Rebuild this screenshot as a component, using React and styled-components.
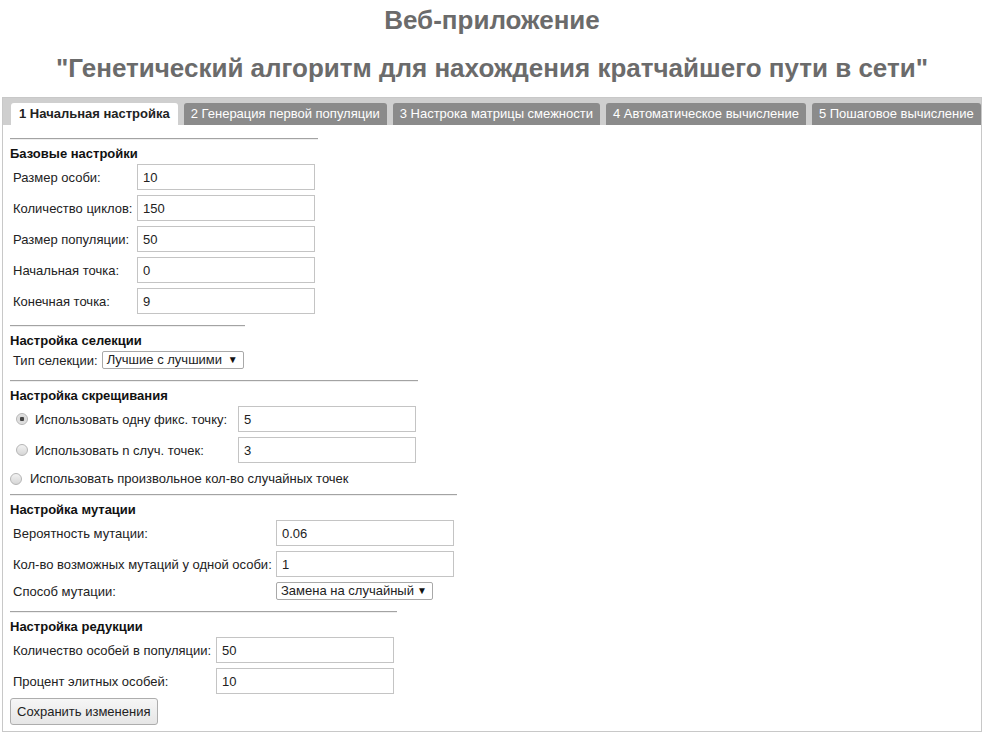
import React from "react"
import styled, { createGlobalStyle } from "styled-components"

const GlobalStyle = createGlobalStyle`
  body {
    margin: 0;
    background: #fff;
    font-family: "Liberation Sans", Arial, sans-serif;
    font-size: 13px;
    color: #222;
  }
`

const Page = styled.div`
  padding: 0 2px;
`

const Title = styled.h1`
  margin: 0;
  padding-top: ${props => props.$top}px;
  text-align: center;
  font-size: 26px;
  line-height: 30px;
  font-weight: bold;
  color: #6b6b6b;
`

const Panel = styled.div`
  margin-top: 14px;
  border: 1px solid #c8c8c8;
  height: 635px;
  box-sizing: border-box;
`

const TabBar = styled.ul`
  list-style: none;
  margin: 0;
  padding: 5px 0 0 8px;
  display: flex;
  gap: 6px;
  background: #cfcfcf;
  height: 27px;
  box-sizing: border-box;
`

const Tab = styled.li`
  height: 22px;
  line-height: 22px;
  padding: 0 ${props => props.$active ? 8 : 7}px;
  border-radius: 3px 3px 0 0;
  white-space: nowrap;
  background: ${props => props.$active ? "#fff" : "#8b8b8b"};
  color: ${props => props.$active ? "#222" : "#fff"};
  font-weight: ${props => props.$active ? "bold" : "normal"};
`

const Content = styled.div`
  padding: 13px 7px 6px 7px;
`

const Rule = styled.div`
  width: ${props => props.$w}px;
  margin-top: ${props => props.$top ?? 11}px;
  border-top: 1px solid #a3a3a3;
  border-bottom: 1px solid #efefef;
`

const Heading = styled.div`
  margin: 6px 0 3px;
  font-weight: bold;
  line-height: 15px;
  color: #111;
`

const FieldGrid = styled.div`
  display: grid;
  grid-template-columns: ${props => props.$label}px 178px;
  row-gap: 5px;
  align-items: center;
`

const Label = styled.div`
  padding-left: 3px;
  white-space: nowrap;
`

const Input = styled.input`
  box-sizing: border-box;
  width: 178px;
  height: 26px;
  border: 1px solid #c4c4c4;
  padding: 0 5px;
  font: inherit;
  color: #222;
  outline: none;
`

const Inline = styled.div`
  display: flex;
  align-items: center;
  gap: 4px;
  padding-left: 3px;
`

const Select = styled.div`
  box-sizing: border-box;
  width: ${props => props.$w}px;
  height: 18px;
  border: 1px solid #a9a9a9;
  border-radius: 2px;
  background: #fff;
  display: flex;
  align-items: center;
  justify-content: space-between;
  padding: 0 5px 0 4px;
  white-space: nowrap;
  line-height: 16px;

  &::after {
    content: "▼";
    font-size: 10px;
    color: #111;
  }
`

const RadioLabel = styled.label`
  display: flex;
  align-items: center;
  gap: ${props => props.$gap ?? 7}px;
  padding-left: ${props => props.$pad ?? 6}px;
  white-space: nowrap;
`

const Radio = styled.span`
  box-sizing: border-box;
  width: 12px;
  height: 12px;
  border-radius: 50%;
  border: 1px solid #b5b5b5;
  background: ${props => props.$checked
    ? "radial-gradient(circle, #444 0 2px, #d8d8d8 2.5px, #ededed 100%)"
    : "linear-gradient(#f2f2f2, #d6d6d6)"};
  flex: none;
`

const FreeRow = styled.div`
  margin-top: 8px;
  line-height: 16px;
`

const Button = styled.button`
  margin-top: 4px;
  height: 27px;
  padding: 0 6px;
  font: inherit;
  color: #222;
  background: linear-gradient(#f6f6f6, #e6e6e6);
  border: 1px solid #adadad;
  border-radius: 3px;
`

const tabs = [
  "1 Начальная настройка",
  "2 Генерация первой популяции",
  "3 Настрока матрицы смежности",
  "4 Автоматическое вычисление",
  "5 Пошаговое вычисление",
]

const Fields = ({ label, rows }) => (
  <FieldGrid $label={label}>
    {rows.map(([name, value]) => (
      <React.Fragment key={name}>
        <Label>{name}</Label>
        <Input defaultValue={value} />
      </React.Fragment>
    ))}
  </FieldGrid>
)

export default function App() {
  return (
    <Page>
      <GlobalStyle />
      <Title $top={5}>Веб-приложение</Title>
      <Title $top={18}>"Генетический алгоритм для нахождения кратчайшего пути в сети"</Title>

      <Panel>
        <TabBar>
          {tabs.map((t, i) => <Tab key={t} $active={i === 0}>{t}</Tab>)}
        </TabBar>

        <Content>
          <Rule $w={308} $top={0} />
          <Heading>Базовые настройки</Heading>
          <Fields label={127} rows={[
            ["Размер особи:", "10"],
            ["Количество циклов:", "150"],
            ["Размер популяции:", "50"],
            ["Начальная точка:", "0"],
            ["Конечная точка:", "9"],
          ]} />

          <Rule $w={235} />
          <Heading>Настройка селекции</Heading>
          <Inline>
            <span>Тип селекции:</span>
            <Select $w={142}>Лучшие с лучшими</Select>
          </Inline>

          <Rule $w={408} />
          <Heading>Настройка скрещивания</Heading>
          <FieldGrid $label={228}>
            <RadioLabel><Radio $checked />Использовать одну фикс. точку:</RadioLabel>
            <Input defaultValue="5" />
            <RadioLabel><Radio />Использовать n случ. точек:</RadioLabel>
            <Input defaultValue="3" />
          </FieldGrid>
          <FreeRow>
            <RadioLabel $pad={0} $gap={8}><Radio />Использовать произвольное кол-во случайных точек</RadioLabel>
          </FreeRow>

          <Rule $w={447} $top={7} />
          <Heading>Настройка мутации</Heading>
          <FieldGrid $label={266}>
            <Label>Вероятность мутации:</Label>
            <Input defaultValue="0.06" />
            <Label>Кол-во возможных мутаций у одной особи:</Label>
            <Input defaultValue="1" />
            <Label>Способ мутации:</Label>
            <Select $w={157}>Замена на случайный</Select>
          </FieldGrid>

          <Rule $w={387} />
          <Heading>Настройка редукции</Heading>
          <Fields label={206} rows={[
            ["Количество особей в популяции:", "50"],
            ["Процент элитных особей:", "10"],
          ]} />
          <Button>Сохранить изменения</Button>
        </Content>
      </Panel>
    </Page>
  )
}
